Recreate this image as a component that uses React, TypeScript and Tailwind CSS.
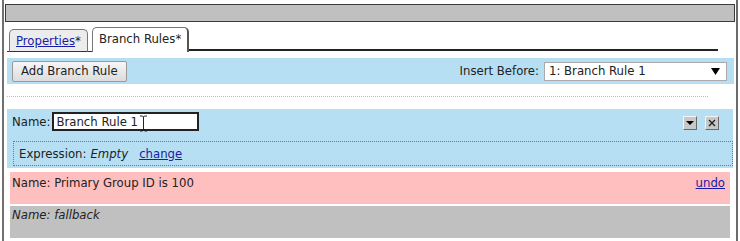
import React from "react";

const font = { fontFamily: "Tahoma, 'DejaVu Sans Condensed', 'Noto Sans', sans-serif" };

function MiniButton({ kind }: { kind: "down" | "close" }) {
  return (
    <div className="w-[14px] h-[14px] bg-[#c8c8c8] border border-t-[#f4f4f4] border-l-[#f4f4f4] border-b-[#6a6a6a] border-r-[#6a6a6a] flex items-center justify-center">
      {kind === "down" ? (
        <svg width="8" height="6" viewBox="0 0 8 6">
          <path d="M0 1 H8 L4 5 Z" fill="#000" />
        </svg>
      ) : (
        <svg width="8" height="8" viewBox="0 0 8 8">
          <path d="M1 1 L7 7 M7 1 L1 7" stroke="#222" strokeWidth="1.4" />
        </svg>
      )}
    </div>
  );
}

export default function App() {
  return (
    <div className="w-[740px] h-[241px] bg-white overflow-hidden text-[13px] leading-[16px] text-[#222]" style={font}>
      <div className="ml-[2px] w-[736px] h-[241px] border-l-2 border-r-2 border-l-[#707070] border-r-[#6a6a6a] pt-[4px] relative">
        <div className="mx-[1px] h-[18px] bg-[#c0c0c0] border border-[#3c3c3c]" />

        {/* tabs */}
        <div className="mt-[5px] ml-[3px] mr-[18px] flex items-end h-[25px]">
          <div className="w-[2px] h-[1px] border-b border-[#333]" />
          <div className="h-[23px] px-[6px] flex items-center rounded-t-[5px] border border-[#777] border-b-[#333] bg-[#ececec]">
            <span className="text-[#1a1aa6] underline">Properties</span>
            <span>*</span>
          </div>
          <div className="w-[4px] border-b border-[#333]" />
          <div className="h-[25px] px-[6px] pb-[2px] flex items-center rounded-t-[5px] border border-b-0 border-[#777] border-r-2 border-r-[#555] bg-white">
            <span>Branch Rules*</span>
          </div>
          <div className="flex-1 mb-[1px] border-b-2 border-[#222]" />
        </div>

        {/* toolbar */}
        <div className="mt-[6px] ml-[3px] mr-[2px] h-[26px] bg-[#b7dff4] flex items-center justify-between pl-[5px] pr-[7px]">
          <button className="h-[21px] px-[8px] border border-[#999] rounded-[2px] bg-gradient-to-b from-[#f6f6f6] to-[#dcdcdc] text-[13px] text-[#222]">
            Add Branch Rule
          </button>
          <div className="flex items-center gap-[5px]">
            <span>Insert Before:</span>
            <div className="w-[183px] h-[19px] bg-white border border-[#aaa] flex items-center justify-between pl-[4px] pr-[6px]">
              <span>1: Branch Rule 1</span>
              <svg width="9" height="8" viewBox="0 0 9 8">
                <path d="M0 1 H9 L4.5 8 Z" fill="#000" />
              </svg>
            </div>
          </div>
        </div>

        <div className="mt-[12px] ml-[3px] mr-[28px] border-t border-dotted border-[#bbb]" />

        {/* rule 1 */}
        <div className="mt-[12px] ml-[3px] mr-[3px] bg-[#b7dff4] pt-[2px] pb-[2px]">
          <div className="flex items-center justify-between pl-[5px] pr-[14px] h-[21px]">
            <div className="flex items-center gap-[2px]">
              <span>Name:</span>
              <div className="w-[147px] h-[19px] bg-white border-2 border-[#222] flex items-center pl-[2px]">
                Branch Rule 1
              </div>
            </div>
            <div className="flex items-center gap-[8px] mt-[3px]">
              <MiniButton kind="down" />
              <MiniButton kind="close" />
            </div>
          </div>
          <div className="mt-[9px] ml-[6px] h-[25px] border border-dotted border-[#777] flex items-center pl-[5px] gap-[4px]">
            <span>Expression:</span>
            <span className="italic">Empty</span>
            <span className="ml-[7px] text-[#1a1aa6] underline">change</span>
          </div>
        </div>

        {/* rule 2 */}
        <div className="mt-[4px] ml-[6px] mr-[6px] h-[32px] bg-[#ffbfbf] flex justify-between pl-[2px] pr-[5px] pt-[3px]">
          <span>Name: Primary Group ID is 100</span>
          <span className="text-[#1a1aa6] underline">undo</span>
        </div>

        {/* rule 3 */}
        <div className="mt-[2px] ml-[6px] mr-[6px] h-[32px] bg-[#c0c0c0] pl-[2px] pt-[1px] italic">
          Name: fallback
        </div>

        {/* text cursor */}
        <svg className="absolute left-[135px] top-[115px]" width="9" height="17" viewBox="0 0 9 17">
          <path d="M1 1 H3.5 L4.5 2 L5.5 1 H8 M4.5 2 V15 M1 16 H3.5 L4.5 15 L5.5 16 H8" stroke="#222" strokeWidth="1" fill="none" />
        </svg>
      </div>
    </div>
  );
}
